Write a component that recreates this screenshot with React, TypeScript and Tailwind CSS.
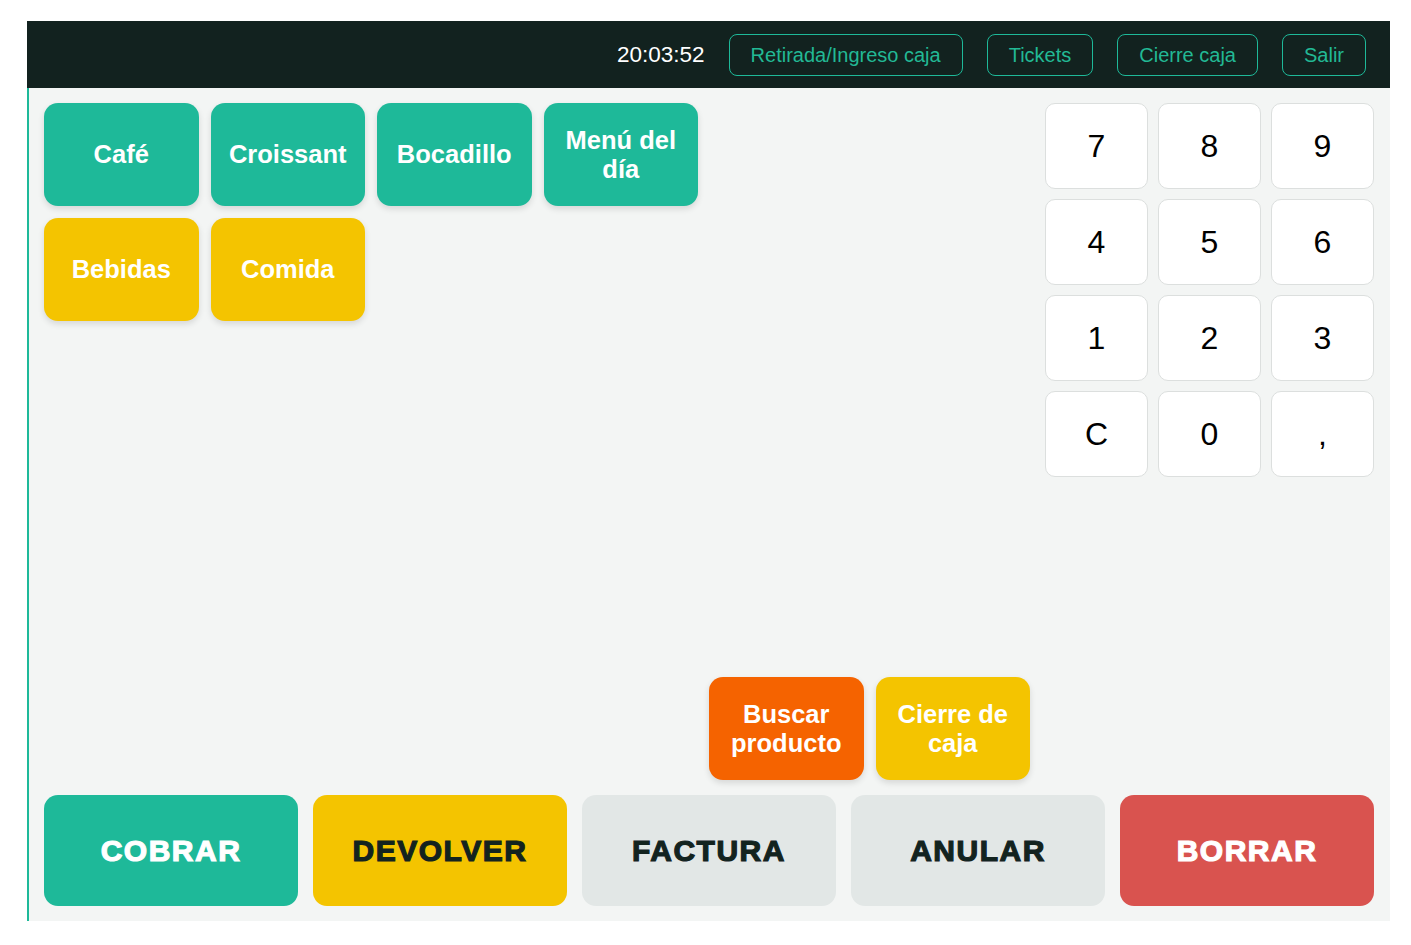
import React, { useEffect, useState } from "react"

const font = "font-['Liberation_Sans',Arial,sans-serif]"

const filas = [
  [
    { label: "Café", color: "bg-[#1eb999]" },
    { label: "Croissant", color: "bg-[#1eb999]" },
    { label: "Bocadillo", color: "bg-[#1eb999]" },
    { label: "Menú del día", color: "bg-[#1eb999]" },
  ],
  [
    { label: "Bebidas", color: "bg-[#f4c400]" },
    { label: "Comida", color: "bg-[#f4c400]" },
  ],
]

const teclas = ["7", "8", "9", "4", "5", "6", "1", "2", "3", "C", "0", ","]

const acciones = [
  { label: "COBRAR", className: "bg-[#1eb999] text-white" },
  { label: "DEVOLVER", className: "bg-[#f4c400] text-[#13231f]" },
  { label: "FACTURA", className: "bg-[#e2e7e6] text-[#13231f]" },
  { label: "ANULAR", className: "bg-[#e2e7e6] text-[#13231f]" },
  { label: "BORRAR", className: "bg-[#d9534f] text-white" },
]

function HeaderButton({ children }: { children: React.ReactNode }) {
  return (
    <button className="h-[42px] rounded-lg border border-[#1eb999] px-[21px] text-[20px] leading-6 text-[#22b995]">
      {children}
    </button>
  )
}

function Tile({ label, color }: { label: string; color: string }) {
  return (
    <button
      className={`${color} flex h-[103px] w-[154.5px] items-center justify-center rounded-[14px] px-3 text-center text-[25.5px] font-bold leading-[29px] text-white shadow-[0_3px_6px_rgba(0,0,0,0.12)]`}
    >
      {label}
    </button>
  )
}

export default function App() {
  const [hora, setHora] = useState("20:03:52")

  useEffect(() => {
    // reloj fijo para la captura
    setHora("20:03:52")
  }, [])

  return (
    <div className={`${font} min-h-screen w-full bg-white`}>
      <div className="ml-[27px] pt-[21px]">
        <div className="flex h-[900px] w-[1363px] flex-col">
          <header className="flex h-[67px] shrink-0 items-center justify-end gap-6 bg-[#12221f] pr-6">
            <span className="text-[22.5px] text-white">{hora}</span>
            <HeaderButton>Retirada/Ingreso caja</HeaderButton>
            <HeaderButton>Tickets</HeaderButton>
            <HeaderButton>Cierre caja</HeaderButton>
            <HeaderButton>Salir</HeaderButton>
          </header>

          <main className="flex flex-1 flex-col border-l-2 border-[#1eb999] bg-[#f3f5f4] pb-[15px] pl-[15px] pr-[16px] pt-[15px]">
            <div className="flex flex-1 gap-[15px]">
              <div className="flex flex-1 flex-col justify-between">
                <div className="flex flex-col gap-3">
                  {filas.map((fila, i) => (
                    <div key={i} className="flex gap-3">
                      {fila.map((p) => (
                        <Tile key={p.label} {...p} />
                      ))}
                    </div>
                  ))}
                </div>
                <div className="flex justify-end gap-3">
                  <Tile label="Buscar producto" color="bg-[#f56300]" />
                  <Tile label="Cierre de caja" color="bg-[#f4c400]" />
                </div>
              </div>

              <div className="grid w-[329px] grid-cols-3 gap-[10px] self-start">
                {teclas.map((t) => (
                  <button
                    key={t}
                    className="flex h-[86px] items-center justify-center rounded-[10px] border border-[#dcdfde] bg-white text-[32px] text-black"
                  >
                    {t}
                  </button>
                ))}
              </div>
            </div>

            <div className="mt-[15px] grid h-[111px] grid-cols-5 gap-[15px]">
              {acciones.map((a) => (
                <button
                  key={a.label}
                  className={`${a.className} rounded-[14px] text-[30px] font-bold tracking-[1.5px] [-webkit-text-stroke:1.2px_currentColor]`}
                >
                  {a.label}
                </button>
              ))}
            </div>
          </main>
        </div>
      </div>
    </div>
  )
}
